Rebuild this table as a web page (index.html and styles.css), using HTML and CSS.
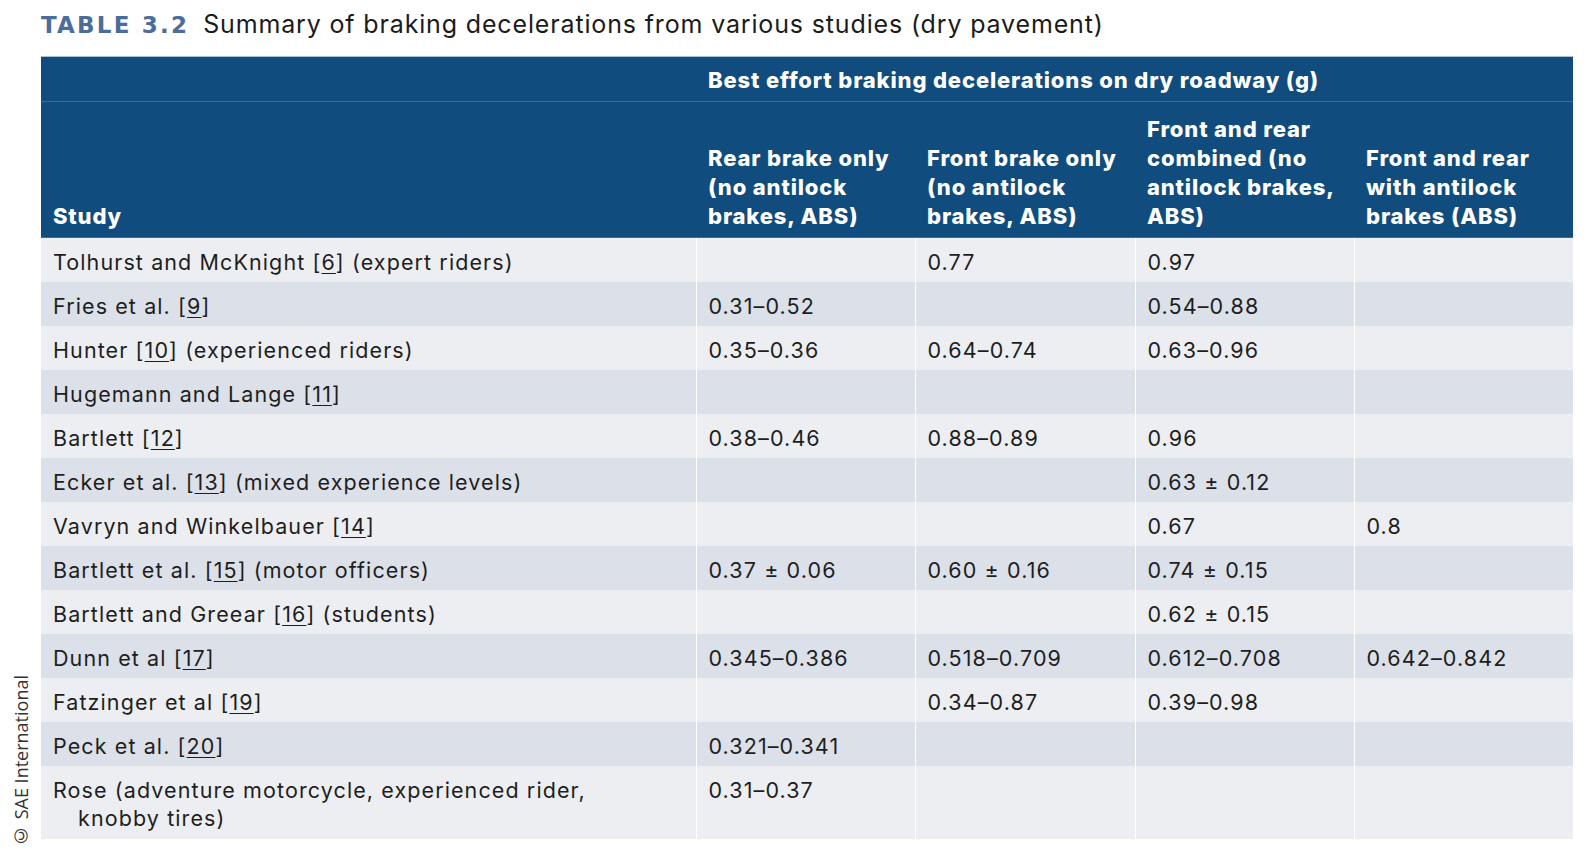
FILE: index.html
```html
<!DOCTYPE html>
<html lang="en">
<head>
<meta charset="utf-8">
<title>Table 3.2</title>
<link rel="stylesheet" href="styles.css">
</head>
<body>
<div class="page">
  <div class="caption"><span class="label">TABLE 3.2</span><span class="caption-text">Summary of braking decelerations from various studies (dry pavement)</span></div>
  <table class="data">
    <colgroup>
      <col class="c-study">
      <col class="c-a">
      <col class="c-b">
      <col class="c-c">
      <col class="c-d">
    </colgroup>
    <thead>
      <tr class="h1">
        <th></th>
        <th colspan="4">Best effort braking decelerations on dry roadway (g)</th>
      </tr>
      <tr class="h2">
        <th>Study</th>
        <th>Rear brake only<br>(no antilock<br>brakes, ABS)</th>
        <th>Front brake only<br>(no antilock<br>brakes, ABS)</th>
        <th>Front and rear<br>combined (no<br>antilock brakes,<br>ABS)</th>
        <th>Front and rear<br>with antilock<br>brakes (ABS)</th>
      </tr>
    </thead>
    <tbody>
      <tr><td>Tolhurst and McKnight [<u>6</u>] (expert riders)</td><td></td><td>0.77</td><td>0.97</td><td></td></tr>
      <tr><td>Fries et al. [<u>9</u>]</td><td>0.31–0.52</td><td></td><td>0.54–0.88</td><td></td></tr>
      <tr><td>Hunter [<u>10</u>] (experienced riders)</td><td>0.35–0.36</td><td>0.64–0.74</td><td>0.63–0.96</td><td></td></tr>
      <tr><td>Hugemann and Lange [<u>11</u>]</td><td></td><td></td><td></td><td></td></tr>
      <tr><td>Bartlett [<u>12</u>]</td><td>0.38–0.46</td><td>0.88–0.89</td><td>0.96</td><td></td></tr>
      <tr><td>Ecker et al. [<u>13</u>] (mixed experience levels)</td><td></td><td></td><td>0.63 ± 0.12</td><td></td></tr>
      <tr><td>Vavryn and Winkelbauer [<u>14</u>]</td><td></td><td></td><td>0.67</td><td>0.8</td></tr>
      <tr><td>Bartlett et al. [<u>15</u>] (motor officers)</td><td>0.37 ± 0.06</td><td>0.60 ± 0.16</td><td>0.74 ± 0.15</td><td></td></tr>
      <tr><td>Bartlett and Greear [<u>16</u>] (students)</td><td></td><td></td><td>0.62 ± 0.15</td><td></td></tr>
      <tr><td>Dunn et al [<u>17</u>]</td><td>0.345–0.386</td><td>0.518–0.709</td><td>0.612–0.708</td><td>0.642–0.842</td></tr>
      <tr><td>Fatzinger et al [<u>19</u>]</td><td></td><td>0.34–0.87</td><td>0.39–0.98</td><td></td></tr>
      <tr><td>Peck et al. [<u>20</u>]</td><td>0.321–0.341</td><td></td><td></td><td></td></tr>
      <tr class="last"><td class="hang">Rose (adventure motorcycle, experienced rider,<br>knobby tires)</td><td>0.31–0.37</td><td></td><td></td><td></td></tr>
    </tbody>
  </table>
  <div class="credit">© SAE International</div>
</div>
</body>
</html>
```
FILE: styles.css
```css
* { box-sizing: border-box; }

html, body {
  margin: 0;
  padding: 0;
  background: #ffffff;
}

.page {
  position: relative;
  width: 1594px;
  height: 864px;
  padding-left: 41px;
  font-family: "Inter", "Open Sans", sans-serif;
  color: #1e1e1e;
}

.caption {
  display: flex;
  align-items: baseline;
  height: 56px;
  padding-top: 9px;
  line-height: 30px;
  white-space: nowrap;
}

.label {
  font-family: "DejaVu Sans", "Inter", sans-serif;
  font-weight: 700;
  font-size: 23px;
  letter-spacing: 2.2px;
  color: #4a6d9b;
  margin-right: 14px;
}

.caption-text {
  font-size: 25px;
  letter-spacing: 0.85px;
  color: #1b1b1b;
}

.data {
  width: 1532px;
  table-layout: fixed;
  border-collapse: collapse;
}

.c-study { width: 655px; }
.c-a { width: 219px; }
.c-b { width: 220px; }
.c-c { width: 219px; }
.c-d { width: 219px; }

.data th {
  background: #114c7e;
  color: #ffffff;
  font-weight: 800;
  font-size: 22px;
  letter-spacing: 0.85px;
  text-align: left;
  white-space: nowrap;
  padding: 0 12px;
}

.h1 th {
  border-top: 1px solid #a9c0d8;
  border-bottom: 1px solid #3a6a98;
  line-height: 28px;
  padding-top: 9px;
  padding-bottom: 7px;
}

.h2 th {
  vertical-align: bottom;
  line-height: 29px;
  padding-top: 13px;
  padding-bottom: 6px;
  border-bottom: 1px solid #3d6c99;
}

.data td {
  font-size: 21.5px;
  letter-spacing: 1.1px;
  line-height: 28px;
  padding: 10px 12px 6px;
  white-space: nowrap;
  vertical-align: top;
  border-left: 1px solid #ffffff;
}

.data td:first-child {
  border-left: 0;
}

.data tbody tr:nth-child(odd) td { background: #eceef2; }
.data tbody tr:nth-child(even) td { background: #dce0e8; }

.data u {
  text-decoration-thickness: 1px;
  text-underline-offset: 3px;
}

.last td {
  padding-bottom: 7px;
}

.hang {
  padding-left: 37px !important;
  text-indent: -25px;
}

.credit {
  position: absolute;
  left: 11px;
  top: 672px;
  height: 176px;
  writing-mode: vertical-rl;
  transform: rotate(180deg);
  font-family: "Open Sans", "Noto Sans", sans-serif;
  font-size: 18px;
  line-height: 20px;
  color: #333333;
  white-space: nowrap;
}
```
